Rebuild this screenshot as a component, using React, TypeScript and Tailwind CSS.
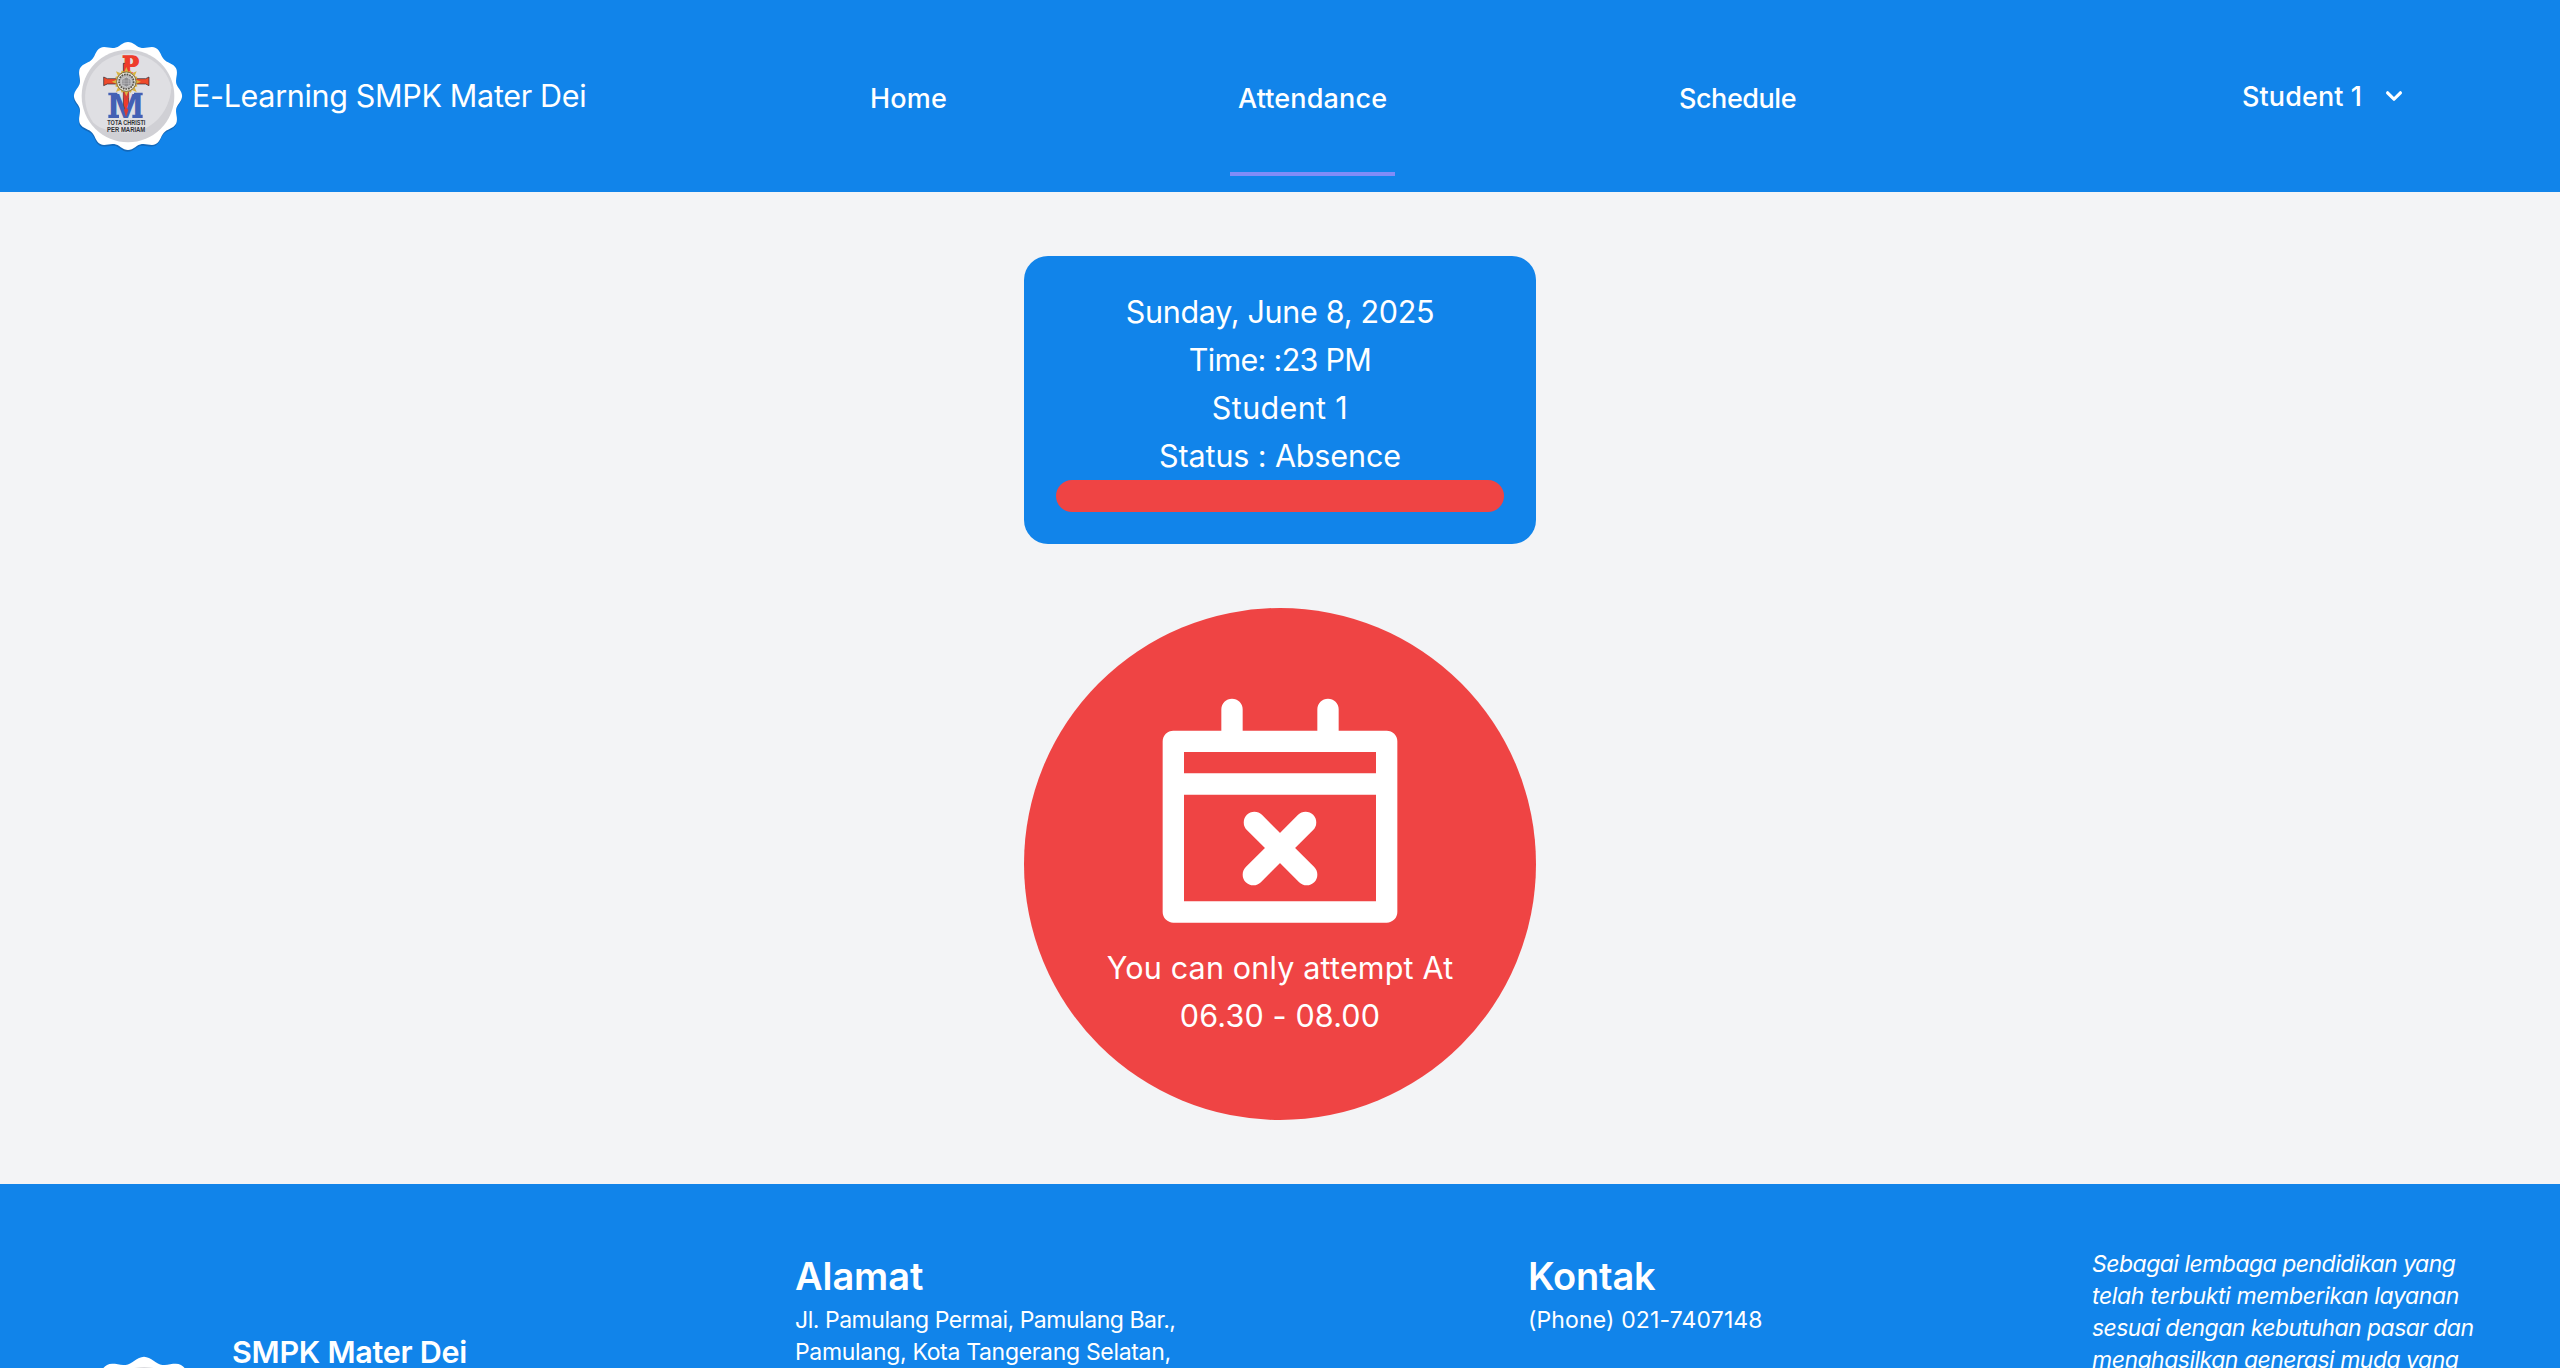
import type { ReactNode } from "react";

// Scalloped badge edge: twelve soft points around the centre.
const scallops = Array.from({ length: 180 }, (_, i) => {
  const a = (i * Math.PI) / 90;
  const r = 158 + 7 * Math.cos(12 * a) - 2.7 * Math.cos(4 * a);
  return `${(204 + r * Math.sin(a)).toFixed(1)},${(198 - r * Math.cos(a)).toFixed(1)}`;
}).join(" ");

// Sun rays behind the host in the centre of the cross.
const rays = Array.from({ length: 32 }, (_, i) => {
  const a = (i * Math.PI) / 16;
  const r = i % 2 ? 30 : i % 4 ? 36 : 44;
  return `${(199 + r * Math.sin(a)).toFixed(1)},${(155 - r * Math.cos(a)).toFixed(1)}`;
}).join(" ");

function SchoolLogo({ className }: { className: string }) {
  return (
    <svg viewBox="42 36 324 324" className={`overflow-visible ${className}`}>
      <polygon points={scallops} fill="#1a4f8a" opacity="0.5" transform="translate(-1 5)" className="blur-[2px]" />
      <polygon points={scallops} fill="#ffffff" />
      <circle cx="204" cy="198" r="139" fill="#d0d0d5" />
      <path d="M100 278A131 131 0 1 1 334 172C330 250 270 308 204 308C160 308 120 298 100 278Z" fill="#dfdfe3" />
      <g stroke="#2b2530" strokeWidth="2">
        <path d="M190 100H206V238L198 262L190 238Z" fill="#ee3b2b" />
        <path d="M131 141L142 146H257L267 141V167L257 162H142L131 167Z" fill="#ee4a2b" />
      </g>
      <text x="187" y="131" fontSize="72" fontWeight="700" textLength="50" lengthAdjust="spacingAndGlyphs" fill="#ee3b2b" stroke="#ee3b2b" strokeWidth="4" className="font-['DejaVu_Serif']">P</text>
      <text x="144" y="263" fontSize="104" fontWeight="700" textLength="106" lengthAdjust="spacingAndGlyphs" fill="#4460b4" className="font-['Liberation_Sans']">M</text>
      <path d="M145 188H172V196H145ZM222 188H248V196H222ZM145 254H177V264H145ZM217 254H248V264H217Z" fill="#4460b4" />
      <path d="M192 240L198 232L205 240L198 262Z" fill="#d93a35" />
      <path d="M191 184H206V202L198 212L191 202Z" fill="#d93a35" />
      <polygon points={rays} fill="#d9b340" />
      <circle cx="199" cy="155" r="29" fill="#e8e6da" stroke="#4a4433" strokeWidth="2" />
      <circle cx="199" cy="155" r="22" fill="#b7b7b9" stroke="#55514a" strokeWidth="5" strokeDasharray="5 3" />
      <path d="M185 149L199 141L213 149V164L199 171L185 164Z" fill="#8d8d91" stroke="#d8d8d8" strokeWidth="2" />
      <path d="M185 153H213M185 160H213M192 145V167M206 145V167" stroke="#c5c5c8" strokeWidth="1.5" />
      <text x="142" y="284" fontSize="20" fontWeight="700" textLength="114" lengthAdjust="spacingAndGlyphs" fill="#333338" className="font-['Liberation_Sans']">TOTA CHRISTI</text>
      <text x="141" y="305" fontSize="20" fontWeight="700" textLength="115" lengthAdjust="spacingAndGlyphs" fill="#333338" className="font-['Liberation_Sans']">PER MARIAM</text>
    </svg>
  );
}

function NavItem({ active = false, className = "", children }: { active?: boolean; className?: string; children: ReactNode }) {
  return (
    <a className={`flex h-[176px] items-center border-b-4 px-2 pt-[26px] text-[27px] leading-10 font-[470] whitespace-nowrap ${active ? "border-[#818cf8]" : "border-transparent"} ${className}`}>
      {children}
    </a>
  );
}

function Header() {
  return (
    <header className="flex h-[192px] shrink-0 items-center bg-[#1184ea] pl-[74px]">
      <div className="flex w-[788px] items-center gap-[10px]">
        <SchoolLogo className="size-[108px]" />
        <span className="text-[30.5px] leading-[48px] tracking-[-0.33px] whitespace-nowrap">E-Learning SMPK Mater Dei</span>
      </div>
      <nav className="flex w-[1380px] self-start">
        <div className="w-[368px]"><NavItem className="w-min tracking-[0.2px]">Home</NavItem></div>
        <div className="w-[441px]"><NavItem active className="w-[165px] tracking-[0.15px]">Attendance</NavItem></div>
        <NavItem className="w-min tracking-[-0.46px]">Schedule</NavItem>
      </nav>
      <button className="flex items-center text-[27px] leading-10 font-[470] whitespace-nowrap">
        <span className="w-[136px] pt-0.5 text-left tracking-[0.1px]">Student 1</span>
        <svg viewBox="0 0 20 20" className="size-8" fill="currentColor">
          <path fillRule="evenodd" clipRule="evenodd" d="M5.293 7.293a1 1 0 011.414 0L10 10.586l3.293-3.293a1 1 0 111.414 1.414l-4 4a1 1 0 01-1.414 0l-4-4a1 1 0 010-1.414z" />
        </svg>
      </button>
    </header>
  );
}

function CalendarX() {
  return (
    <svg viewBox="0 0 24 24" className="size-64" fill="none">
      <path fill="#fff" fillRule="evenodd" d="M6.5 4V2a1 1 0 0 1 2 0V4H15.5V2a1 1 0 0 1 2 0V4H22a1 1 0 0 1 1 1V21a1 1 0 0 1-1 1H2a1 1 0 0 1-1-1V5a1 1 0 0 1 1-1ZM3 6V8H21V6ZM3 10V20H21V10Z" />
      <path d="M9.6 12.6L14.5 17.5M14.4 12.6L9.5 17.5" stroke="#fff" strokeWidth="2" strokeLinecap="round" />
    </svg>
  );
}

function StatusCard() {
  return (
    <section className="flex h-72 w-[512px] flex-col rounded-3xl bg-[#1184ea] p-8 text-center text-[30.5px] leading-[48px]">
      <p className="tracking-[-0.29px]">Sunday, June 8, 2025</p>
      <p className="tracking-[-0.7px]">Time: :23 PM</p>
      <p className="tracking-[0.36px]">Student 1</p>
      <p className="tracking-[-0.12px]">Status : Absence</p>
      <div className="h-8 rounded-2xl bg-[#ef4444]" />
    </section>
  );
}

function AttemptCircle() {
  return (
    <section className="flex size-[512px] flex-col items-center rounded-full bg-[#ef4444] pt-20 text-[30.5px] leading-[48px]">
      <CalendarX />
      <p className="tracking-[0.18px]">You can only attempt At</p>
      <p className="tracking-[0.16px]">06.30 - 08.00</p>
    </section>
  );
}

function Footer() {
  return (
    <footer className="flex h-[184px] shrink-0 overflow-hidden bg-[#1184ea] pt-16 pl-[72px] text-[23px] leading-8 whitespace-nowrap">
      <div className="flex w-[723px] gap-4 pt-20">
        <SchoolLogo className="mt-[29px] size-36 shrink-0" />
        <h2 className="text-[30.5px] leading-[48px] font-[580] tracking-[-0.27px]">SMPK Mater Dei</h2>
      </div>
      <div className="w-[733px]">
        <h3 className="text-[38px] leading-[56px] font-[580] tracking-[-0.1px]">Alamat</h3>
        <p className="tracking-[-0.47px]">Jl. Pamulang Permai, Pamulang Bar.,</p>
        <p className="tracking-[-0.32px]">Pamulang, Kota Tangerang Selatan,</p>
      </div>
      <div className="w-[564px]">
        <h3 className="text-[38px] leading-[56px] font-[580] tracking-[-0.2px]">Kontak</h3>
        <p className="tracking-[0.14px]">(Phone) 021-7407148</p>
      </div>
      <div className="italic">
        <p className="tracking-[-0.51px]">Sebagai lembaga pendidikan yang</p>
        <p className="tracking-[-0.36px]">telah terbukti memberikan layanan</p>
        <p className="tracking-[-0.56px]">sesuai dengan kebutuhan pasar dan</p>
        <p className="tracking-[-0.5px]">menghasilkan generasi muda yang</p>
      </div>
    </footer>
  );
}

export default function App() {
  return (
    <div className="flex h-[1368px] w-[2560px] flex-col overflow-hidden bg-gray-100 font-['Inter',sans-serif] text-white antialiased">
      <Header />
      <main className="flex h-[992px] shrink-0 flex-col items-center gap-16 pt-16">
        <StatusCard />
        <AttemptCircle />
      </main>
      <Footer />
    </div>
  );
}
